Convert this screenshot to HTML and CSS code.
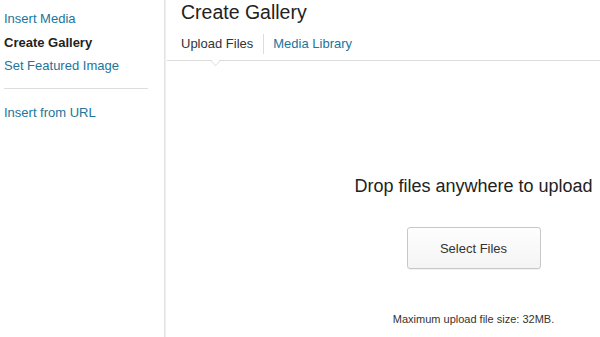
FILE: index.html
```html
<!DOCTYPE html>
<html>
<head>
<meta charset="utf-8">
<link rel="stylesheet" href="styles.css">
</head>
<body>
<div class="frame">
  <nav class="menu">
    <a class="item">Insert Media</a>
    <a class="item active">Create Gallery</a>
    <a class="item">Set Featured Image</a>
    <div class="sep"></div>
    <a class="item">Insert from URL</a>
  </nav>
  <main class="main">
    <header class="head">
      <h1 class="title">Create Gallery</h1>
      <div class="tabs">
        <a class="tab current">Upload Files</a>
        <a class="tab">Media Library</a>
      </div>
    </header>
    <section class="uploader">
      <div class="drop">Drop files anywhere to upload</div>
      <button class="btn">Select Files</button>
      <p class="max">Maximum upload file size: 32MB.</p>
    </section>
  </main>
</div>
</body>
</html>
```
FILE: styles.css
```css
html, body {
  margin: 0;
  padding: 0;
  width: 600px;
  height: 337px;
  overflow: hidden;
  background: #fff;
  font-family: Arial, "Liberation Sans", sans-serif;
}
.frame {
  display: flex;
  height: 337px;
}
.menu {
  width: 165px;
  flex: none;
  box-sizing: border-box;
  padding: 11px 0 0 4px;
  display: flex;
  flex-direction: column;
  border-right: 1px solid #e2e2e2;
  box-shadow: 1px 0 1px rgba(0,0,0,0.06);
}
.item {
  font-size: 13px;
  line-height: 16px;
  padding: 0;
  margin-bottom: 7.5px;
  color: #21759b;
}
.item.active {
  color: #222;
  font-weight: bold;
}
.sep {
  height: 1px;
  background: #ddd;
  width: 144px;
  margin: 6.5px 0 15.5px;
}
.main {
  flex: 1;
  min-width: 0;
  margin-left: 2px;
  display: flex;
  flex-direction: column;
}
.head {
  padding-left: 14px;
  border-bottom: 1px solid #dcdcdc;
  position: relative;
}
.head::after {
  content: "";
  position: absolute;
  left: 44px;
  bottom: -6px;
  width: 8px;
  height: 8px;
  background: #fff;
  border-right: 1px solid #dcdcdc;
  border-bottom: 1px solid #dcdcdc;
  transform: rotate(45deg) scale(0.7);
}
.title {
  margin: 0;
  font-weight: normal;
  font-size: 19.5px;
  line-height: 24px;
  color: #222;
  padding-top: 0;
}
.tabs {
  display: flex;
  align-items: center;
  height: 32px;
  padding-top: 4px;
}
.tab {
  font-size: 13px;
  color: #21759b;
  padding: 2px 9px;
  line-height: 16px;
}
.tab.current {
  color: #333;
  padding-left: 0;
  border-right: 1px solid #ddd;
  padding-right: 10px;
}
.uploader {
  display: flex;
  flex-direction: column;
  align-items: center;
  padding-top: 115px;
  padding-left: 180px;
}
.drop {
  font-size: 18px;
  color: #222;
  line-height: 20px;
  white-space: nowrap;
}
.btn {
  margin-top: 31px;
  width: 134px;
  height: 42px;
  border: 1px solid #c8c8c8;
  border-radius: 3px;
  background: linear-gradient(#fefefe, #f4f4f4);
  font-family: Arial, "Liberation Sans", sans-serif;
  font-size: 13px;
  color: #333;
  box-shadow: 0 1px 0 rgba(0,0,0,0.05);
}
.max {
  margin: 44px 0 0;
  font-size: 11px;
  color: #333;
}
```
